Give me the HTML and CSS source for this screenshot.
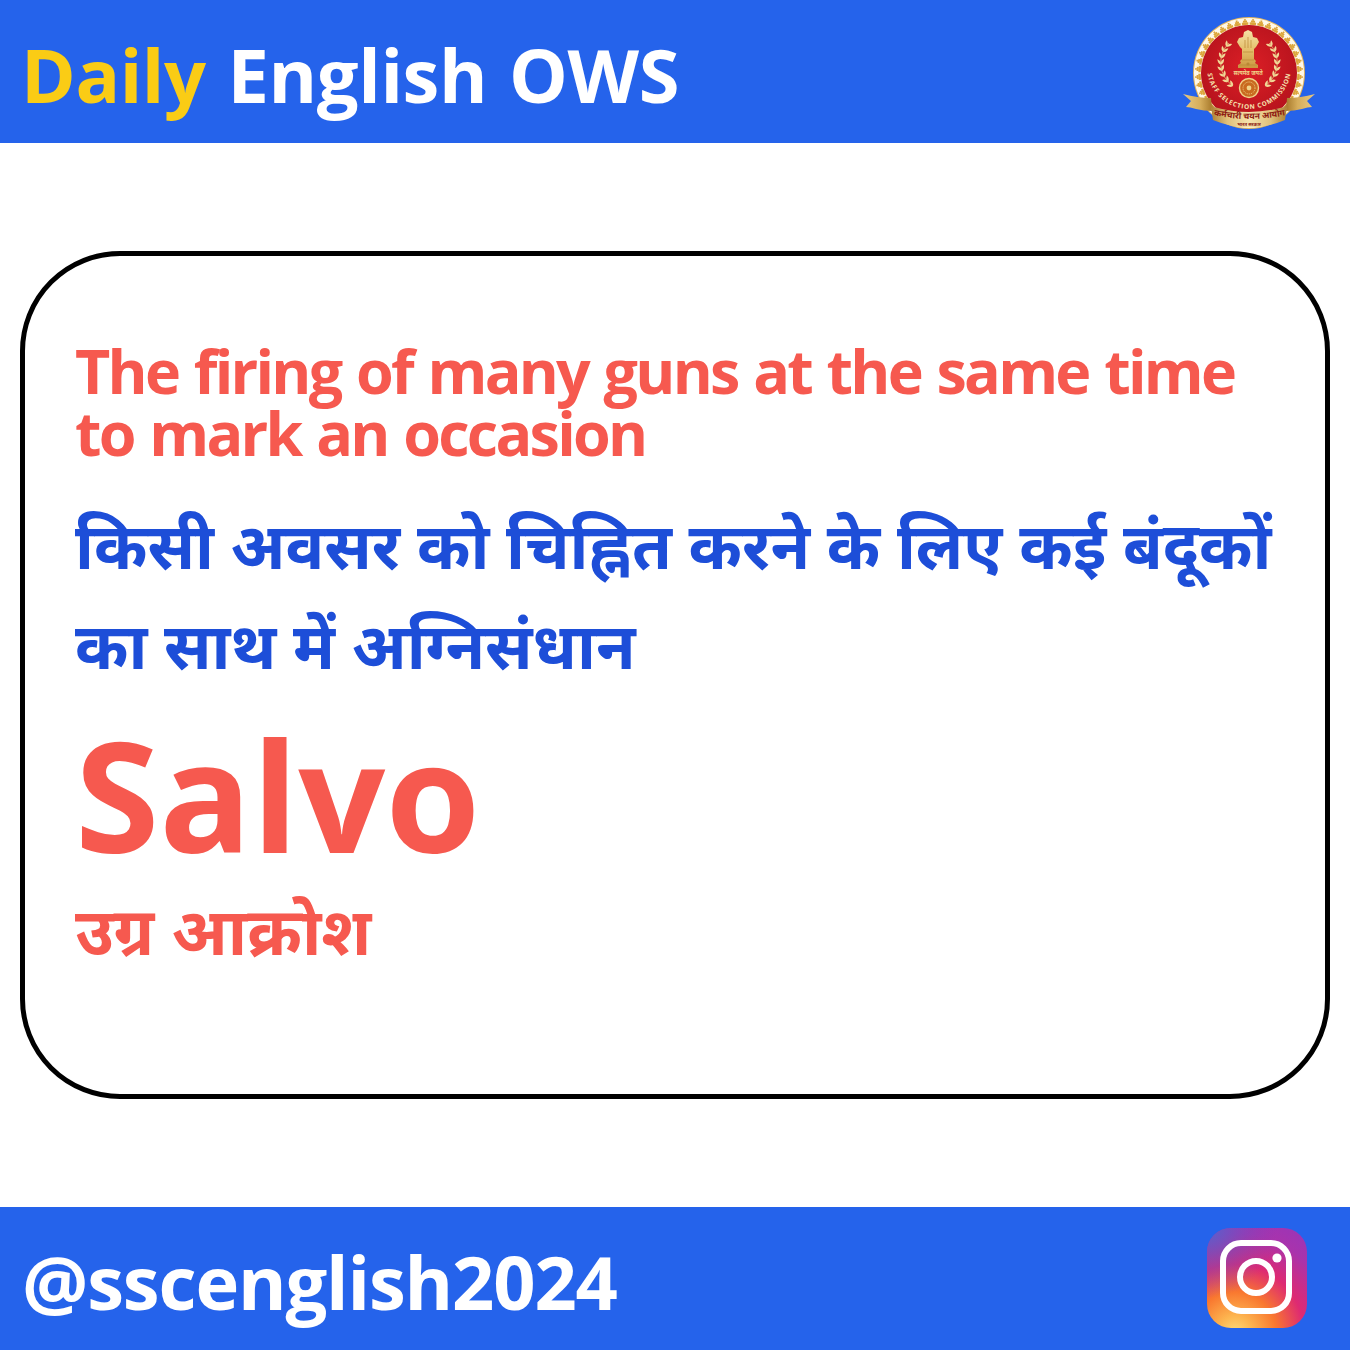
FILE: index.html
```html
<!DOCTYPE html>
<html lang="en"><head><meta charset="utf-8"><title>Daily English OWS</title><link rel="stylesheet" href="styles.css"></head>
<body>
<div class="page">
<header class="bar bar-top">
<h1 class="brand"><span class="daily">Daily</span> English OWS</h1>
<svg class="emblem" viewBox="1180 12 138 118" aria-label="Staff Selection Commission emblem">
<defs>
<linearGradient id="gold" x1="0" y1="0" x2="0" y2="1"><stop offset="0" stop-color="#f6e2a6"/><stop offset=".55" stop-color="#e3bd68"/><stop offset="1" stop-color="#c9963f"/></linearGradient>
<linearGradient id="tailL" x1="0" y1="0" x2="1" y2="0"><stop offset="0" stop-color="#e9c981"/><stop offset=".6" stop-color="#d6ad5b"/><stop offset="1" stop-color="#a87a2c"/></linearGradient>
<linearGradient id="tailR" x1="1" y1="0" x2="0" y2="0"><stop offset="0" stop-color="#e9c981"/><stop offset=".6" stop-color="#d6ad5b"/><stop offset="1" stop-color="#a87a2c"/></linearGradient>
<linearGradient id="rib" x1="0" y1="0" x2="1" y2="0"><stop offset="0" stop-color="#a97b30"/><stop offset=".22" stop-color="#e0c07a"/><stop offset=".5" stop-color="#f5e3ad"/><stop offset=".78" stop-color="#e0c07a"/><stop offset="1" stop-color="#a97b30"/></linearGradient>
<radialGradient id="red" cx=".5" cy=".45" r=".6"><stop offset="0" stop-color="#dc1f26"/><stop offset="1" stop-color="#b3121c"/></radialGradient>
<path id="arc" d="M1207 66 A42 42 0 0 0 1291 66"/>
<path id="ribline" d="M1213 114 Q1249 122 1286 114"/>
<path id="leaf" d="M0 0 Q2.4 -2.6 0 -6.4 Q-2.4 -2.6 0 0z" fill="#f0d896"/>
<g id="pair">
<use href="#leaf" transform="translate(1221 62) rotate(-32)"/>
<use href="#leaf" transform="translate(1221 62) rotate(30)"/>
</g>
<g id="branch">
<path d="M1233 85 A28 28 0 0 1 1229 42" fill="none" stroke="#e7c77e" stroke-width=".8"/>
<use href="#pair" transform="rotate(-55 1249 62)"/>
<use href="#pair" transform="rotate(-42 1249 62)"/>
<use href="#pair" transform="rotate(-29 1249 62)"/>
<use href="#pair" transform="rotate(-16 1249 62)"/>
<use href="#pair" transform="rotate(-3 1249 62)"/>
<use href="#pair" transform="rotate(10 1249 62)"/>
<use href="#pair" transform="rotate(23 1249 62)"/>
<use href="#pair" transform="rotate(36 1249 62)"/>
</g>
</defs>
<circle cx="1249" cy="72" r="56" fill="#e3b660"/>
<circle cx="1249" cy="72" r="55" fill="#fff8e8"/>
<g fill="none" stroke="#dca53b">
<circle cx="1249" cy="72" r="49.5" stroke-width="2.4" pathLength="360" stroke-dasharray="7.4 1.6" stroke-dashoffset="-.8"/>
<circle cx="1249" cy="72" r="51.5" stroke-width="2" pathLength="360" stroke-dasharray="4.6 4.4" stroke-dashoffset="-2.2"/>
<circle cx="1249" cy="72" r="53.2" stroke-width="1.6" pathLength="360" stroke-dasharray="2 7" stroke-dashoffset="-3.5"/>
</g>
<circle cx="1249" cy="72" r="48" fill="url(#red)"/>
<path d="M1248 29 L1252 31 1253 36 1257 37 1259 41 1256 46 1254 48 1254 58 1256 60 1255 62 1258 64 1258 67 1238 67 1238 64 1241 62 1240 60 1242 58 1242 48 1240 46 1237 41 1239 37 1243 36 1244 31z" fill="url(#gold)"/>
<path d="M1245 39 V47 M1248 36 V47 M1251 39 V47 M1243 51 H1253 M1242 59 H1254 M1239 64 H1257" fill="none" stroke="#b98735" stroke-width=".7"/>
<circle cx="1248" cy="63" r="1.6" fill="#b98735"/>
<use href="#branch"/>
<use href="#branch" transform="translate(2498 0) scale(-1 1)"/>
<text class="seal-motto" x="1248" y="74" text-anchor="middle">सत्यमेव जयते</text>
<circle cx="1249" cy="87" r="9.5" fill="#c96a1f" stroke="#f0d48a" stroke-width="1.4"/>
<circle cx="1249" cy="87" r="6" fill="none" stroke="#f0d48a" stroke-width="1" stroke-dasharray="1 1"/>
<circle cx="1249" cy="87" r="2.4" fill="#f0d48a"/>
<text class="seal-arc"><textPath href="#arc" startOffset="50%" text-anchor="middle">STAFF SELECTION COMMISSION</textPath></text>
<path d="M1183 93 Q1198 97 1211 97 L1212 110 Q1204 110 1196 108 Q1190 106 1186 106 L1191 100z" fill="url(#tailL)"/>
<path d="M1315 93 Q1300 97 1287 97 L1286 110 Q1294 110 1302 108 Q1308 106 1312 106 L1307 100z" fill="url(#tailR)"/>
<path d="M1210 99 Q1212 105 1214 106 Q1249 116 1284 106 Q1287 104 1288 99 L1285 119 Q1249 134 1213 119z" fill="url(#rib)"/>
<text class="seal-rib"><textPath href="#ribline" startOffset="50%" text-anchor="middle">कर्मचारी चयन आयोग</textPath></text>
<text class="seal-sub" x="1249" y="125" text-anchor="middle">भारत सरकार</text>
</svg>
</header>
<main class="main">
<section class="card">
<p class="en">The firing of many guns at the same time to mark an occasion</p>
<p class="hi">किसी अवसर को चिह्नित करने के लिए कई बंदूकों का साथ में अग्निसंधान</p>
<p class="word">Salvo</p>
<p class="mean">उग्र आक्रोश</p>
</section>
</main>
<footer class="bar bar-bottom">
<div class="handle">@sscenglish2024</div>
<svg class="insta" viewBox="0 0 100 100" aria-label="Instagram">
<defs>
<radialGradient id="ig" cx=".28" cy="1.05" r="1.25"><stop offset="0" stop-color="#fedc7a"/><stop offset=".14" stop-color="#fdb44f"/><stop offset=".33" stop-color="#f9772f"/><stop offset=".55" stop-color="#de2a72"/><stop offset=".8" stop-color="#a933ac"/><stop offset="1" stop-color="#9a35b8"/></radialGradient>
<radialGradient id="ig2" cx="0" cy="0" r=".7"><stop offset="0" stop-color="#4f68cf" stop-opacity=".95"/><stop offset="1" stop-color="#7a3fc0" stop-opacity="0"/></radialGradient>
</defs>
<rect width="100" height="100" rx="24" fill="url(#ig)"/>
<rect width="100" height="100" rx="24" fill="url(#ig2)"/>
<rect x="16" y="15" width="66" height="68" rx="18" fill="none" stroke="#fff" stroke-width="6"/>
<circle cx="49" cy="49" r="16" fill="none" stroke="#fff" stroke-width="6"/>
<circle cx="70" cy="30" r="4.6" fill="#fff"/>
</svg>
</footer>
</div>
</body></html>
```
FILE: styles.css
```css
*{box-sizing:border-box}
html,body{margin:0;padding:0;background:#fff}
body{font-family:"Open Sans","Noto Sans",sans-serif}
.page{width:1350px;height:1350px;display:flex;flex-direction:column}
.bar{height:143px;background:#2563eb;display:flex;align-items:center;justify-content:space-between;color:#fff}
.bar-top{padding:0 32px 0 21px}
.bar-bottom{padding:0 43px 0 22px}
.brand{margin:0;font-size:74px;font-weight:700;line-height:1.2;letter-spacing:-.4px;word-spacing:3px;position:relative;top:4px}
.daily{color:#facc15}
.handle{font-size:74px;font-weight:700;letter-spacing:-1.15px;position:relative;top:3px}
.emblem{width:138px;height:118px;flex:none}
.insta{width:100px;height:100px;flex:none;margin-bottom:1px}
.seal-motto{font-size:5.6px;fill:#f1d488;font-weight:700}
.seal-arc{font-size:6.4px;fill:#f6e4b0;font-weight:700;letter-spacing:.75px}
.seal-rib{font-size:8.6px;fill:#8e1a12;font-weight:700}
.seal-sub{font-size:4.6px;fill:#8e1a12;font-weight:700}
.main{flex:1;display:flex;align-items:center;padding:0 20px}
.card{width:100%;height:848px;border:5px solid #000;border-radius:100px;padding:84px 35px 84px 50px}
.card p{margin:0}
.en{font-size:61px;line-height:62px;font-weight:700;color:#f6594f;letter-spacing:-2.75px;word-spacing:2.5px;padding-right:20px}
.hi{font-size:64.4px;font-weight:700;color:#1d4ed8;line-height:100px;margin-top:30px!important}
.word{font-size:153px;font-weight:700;color:#f6594f;line-height:170px;margin-top:15px!important}
.mean{font-size:66px;font-weight:700;color:#f6594f;line-height:70px;margin-top:15px!important}
```
